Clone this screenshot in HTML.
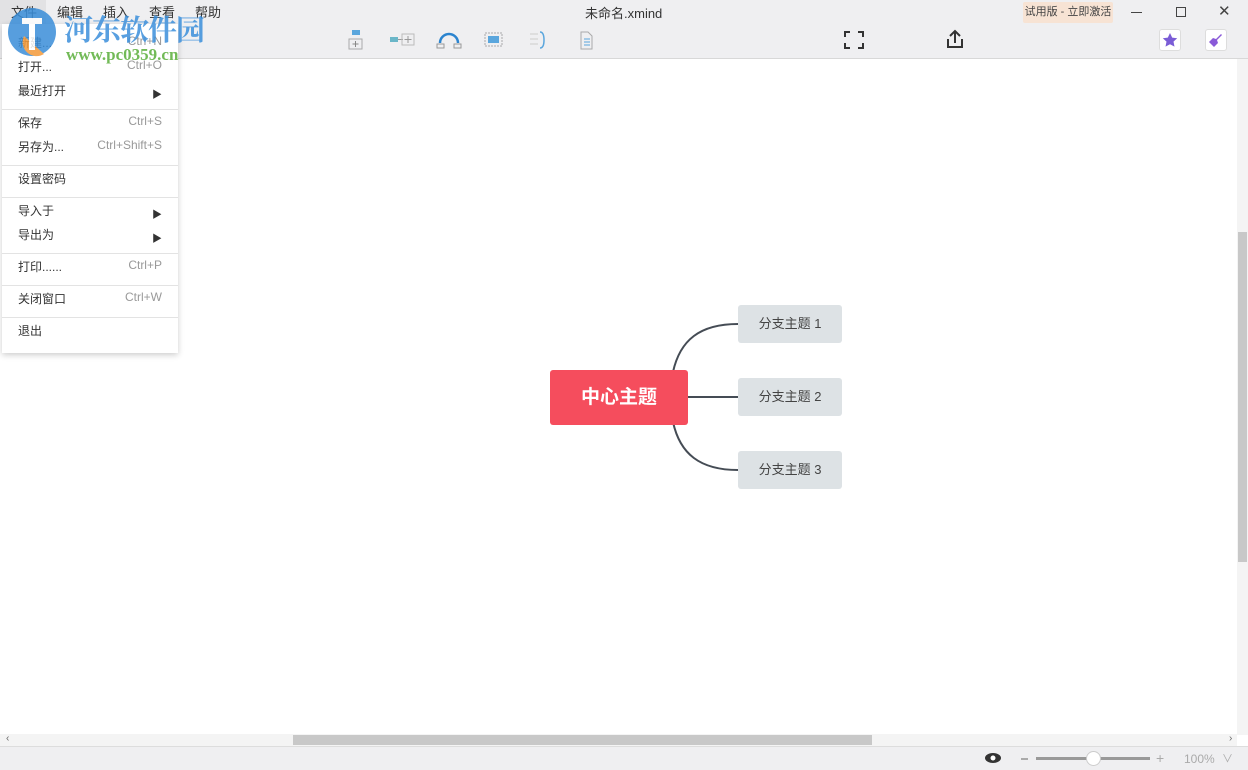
<!DOCTYPE html>
<html><head><meta charset="utf-8"><style>
*{margin:0;padding:0;box-sizing:border-box}
body{width:1248px;height:770px;overflow:hidden;background:#fff;font-family:"Liberation Sans","Noto Sans CJK SC",sans-serif;position:relative;font-size:12px;color:#333}
.abs{position:absolute}
#top{left:0;top:0;width:1248px;height:59px;background:#efeff1;border-bottom:1px solid #d8d8d8}
.mi{top:2px;font-size:13px;color:#333}
#menu{left:2px;top:24px;width:176px;height:329px;background:#fff;box-shadow:0 2px 6px rgba(0,0,0,.2)}
.it{position:absolute;left:16px;font-size:12px;color:#333}
.sc{position:absolute;right:16px;font-size:12px;color:#999}
.ar{position:absolute;right:16px;font-size:10px;color:#333}
.sep{position:absolute;left:0;width:176px;height:1px;background:#e3e3e3}
.node{background:#dde2e5;border-radius:3px;color:#444;font-size:13px;text-align:center;line-height:38px;width:104px;height:38px}
.wm{z-index:10;opacity:.85}
</style></head><body>
<div id="top" class="abs"></div>
<div class="abs" style="left:0;top:0;width:46px;height:24px;background:#e2e2e4"></div>
<div class="abs mi" style="left:11px">文件</div>
<div class="abs mi" style="left:57px">编辑</div>
<div class="abs mi" style="left:103px">插入</div>
<div class="abs mi" style="left:149px">查看</div>
<div class="abs mi" style="left:195px">帮助</div>
<div class="abs" style="left:585px;top:3px;font-size:13px;color:#333">未命名.xmind</div>
<div class="abs" style="left:1023px;top:2px;width:90px;height:21px;background:#f7e3d4;border-radius:2px;font-size:11px;line-height:21px;text-align:center;color:#444">试用版 - 立即激活</div>
<div class="abs" style="left:1131px;top:12px;width:11px;height:1px;background:#444"></div>
<div class="abs" style="left:1176px;top:7px;width:10px;height:10px;border:1px solid #444"></div>
<div class="abs" style="left:1218px;top:2px;font-size:15px;color:#444">✕</div>
<svg class="abs" style="left:340px;top:28px" width="260" height="24">
<rect x="12" y="2" width="8" height="5" fill="#5aa6dd"/><rect x="9" y="11" width="13" height="10" fill="none" stroke="#aaa"/><path d="M15.5 13v6M12.5 16h6" stroke="#888"/>
<rect x="50" y="9" width="8" height="5" fill="#6ab6c8"/><path d="M58 11.5h5" stroke="#999"/><rect x="62" y="6" width="12" height="11" fill="none" stroke="#bbb"/><path d="M68 8v7M64.5 11.5h7" stroke="#999"/>
<path d="M100 15a9 9 0 0 1 18 0" fill="none" stroke="#2b84cf" stroke-width="2.5"/><rect x="97" y="16" width="7" height="4" fill="none" stroke="#999"/><rect x="114" y="16" width="7" height="4" fill="none" stroke="#999"/>
<rect x="145" y="5" width="17" height="13" fill="none" stroke="#aaa" stroke-dasharray="2 1"/><rect x="148" y="8" width="11" height="7" fill="#5aa6dd"/>
<path d="M190 6h8M190 11h8M190 16h8" stroke="#ccc"/><path d="M200 4q4 0 4 8t-4 8" fill="none" stroke="#5aa6dd" stroke-width="1.5"/>
<path d="M241 4h7l4 4v13h-11z" fill="none" stroke="#aaa"/><path d="M244 11h6M244 14h6M244 17h6" stroke="#5aa6dd"/>
</svg>
<svg class="abs" style="left:843px;top:30px" width="22" height="20"><path d="M2 7V2h5M15 2h5v5M20 13v5h-5M7 18H2v-5" fill="none" stroke="#333" stroke-width="2"/></svg>
<svg class="abs" style="left:945px;top:28px" width="20" height="22"><path d="M10 15V3M5 8l5-5 5 5M3 11v8h14v-8" fill="none" stroke="#333" stroke-width="2"/></svg>
<div class="abs" style="left:1159px;top:29px;width:22px;height:22px;background:#fff;border:1px solid #ddd;border-radius:3px"></div>
<svg class="abs" style="left:1162px;top:32px" width="16" height="16"><path d="M8 1l2.2 4.6 5 .6-3.7 3.4 1 5L8 12.2 3.5 14.6l1-5L.8 6.2l5-.6z" fill="#7a5cd6"/></svg>
<div class="abs" style="left:1205px;top:29px;width:22px;height:22px;background:#fff;border:1px solid #ddd;border-radius:3px"></div>
<svg class="abs" style="left:1208px;top:32px" width="16" height="16"><path d="M13 2l1 1-5 5 1 3-4 4-5-5 4-4 3 1z" fill="#8a5ad8"/></svg>
<div id="menu" class="abs">
<div class="it" style="top:10px">新建...</div><div class="sc" style="top:10px">Ctrl+N</div>
<div class="it" style="top:34px">打开...</div><div class="sc" style="top:34px">Ctrl+O</div>
<div class="it" style="top:58px">最近打开</div><div class="ar" style="top:62px">▶</div>
<div class="sep" style="top:85px"></div>
<div class="it" style="top:90px">保存</div><div class="sc" style="top:90px">Ctrl+S</div>
<div class="it" style="top:114px">另存为...</div><div class="sc" style="top:114px">Ctrl+Shift+S</div>
<div class="sep" style="top:141px"></div>
<div class="it" style="top:146px">设置密码</div>
<div class="sep" style="top:173px"></div>
<div class="it" style="top:178px">导入于</div><div class="ar" style="top:182px">▶</div>
<div class="it" style="top:202px">导出为</div><div class="ar" style="top:206px">▶</div>
<div class="sep" style="top:229px"></div>
<div class="it" style="top:234px">打印......</div><div class="sc" style="top:234px">Ctrl+P</div>
<div class="sep" style="top:261px"></div>
<div class="it" style="top:266px">关闭窗口</div><div class="sc" style="top:266px">Ctrl+W</div>
<div class="sep" style="top:293px"></div>
<div class="it" style="top:298px">退出</div>
</div>
<svg class="abs wm" style="left:4px;top:6px" width="62" height="52"><circle cx="28" cy="26" r="24" fill="#3a8ed9"/><path d="M20 30a14 14 0 0 0 20 18" fill="#f39a3a"/><path d="M18 12h20v6h-7v26h-6V18h-7z" fill="#fff"/></svg>
<div class="abs wm" style="left:64px;top:8px;font-family:'Noto Serif CJK SC',serif;font-weight:bold;font-size:29px;color:#3b8fdb;letter-spacing:-1px">河东软件园</div>
<div class="abs wm" style="left:66px;top:45px;font-family:'Liberation Serif',serif;font-weight:bold;font-size:17px;color:#5aae3a">www.pc0359.cn</div>
<svg class="abs" style="left:660px;top:310px" width="90" height="180"><path d="M13 62C20 30 40 14 78 14M28 87H78M13 112C20 144 40 160 78 160" fill="none" stroke="#454c55" stroke-width="2"/></svg>
<div class="abs" style="left:550px;top:370px;width:138px;height:55px;background:#f54d5d;border-radius:3px;color:#fff;font-weight:bold;font-size:19px;line-height:55px;text-align:center">中心主题</div>
<div class="abs node" style="left:738px;top:305px">分支主题 1</div>
<div class="abs node" style="left:738px;top:378px">分支主题 2</div>
<div class="abs node" style="left:738px;top:451px">分支主题 3</div>
<div class="abs" style="left:1237px;top:59px;width:11px;height:676px;background:#f4f4f4"></div>
<div class="abs" style="left:1238px;top:232px;width:9px;height:330px;background:#c8c8c8"></div>
<div class="abs" style="left:0;top:734px;width:1237px;height:12px;background:#f4f4f4"></div>
<div class="abs" style="left:293px;top:735px;width:579px;height:10px;background:#c8c8c8"></div>
<div class="abs" style="left:6px;top:733px;font-size:10px;color:#666">‹</div>
<div class="abs" style="left:1229px;top:733px;font-size:10px;color:#666">›</div>
<div class="abs" style="left:0;top:746px;width:1248px;height:24px;background:#efeff1;border-top:1px solid #ddd"></div>
<svg class="abs" style="left:984px;top:752px" width="18" height="12"><ellipse cx="9" cy="6" rx="8" ry="5" fill="#333"/><circle cx="9" cy="6" r="2.5" fill="#fff"/></svg>
<div class="abs" style="left:1021px;top:758px;width:7px;height:2px;background:#aaa"></div>
<div class="abs" style="left:1036px;top:757px;width:114px;height:3px;background:#999"></div>
<div class="abs" style="left:1086px;top:751px;width:15px;height:15px;border-radius:50%;background:#fff;border:1px solid #ccc"></div>
<div class="abs" style="left:1156px;top:750px;font-size:14px;color:#aaa">+</div>
<div class="abs" style="left:1184px;top:752px;font-size:12px;color:#aaa">100%</div>
<div class="abs" style="left:1222px;top:750px;font-size:11px;color:#aaa">∨</div>
</body></html>
